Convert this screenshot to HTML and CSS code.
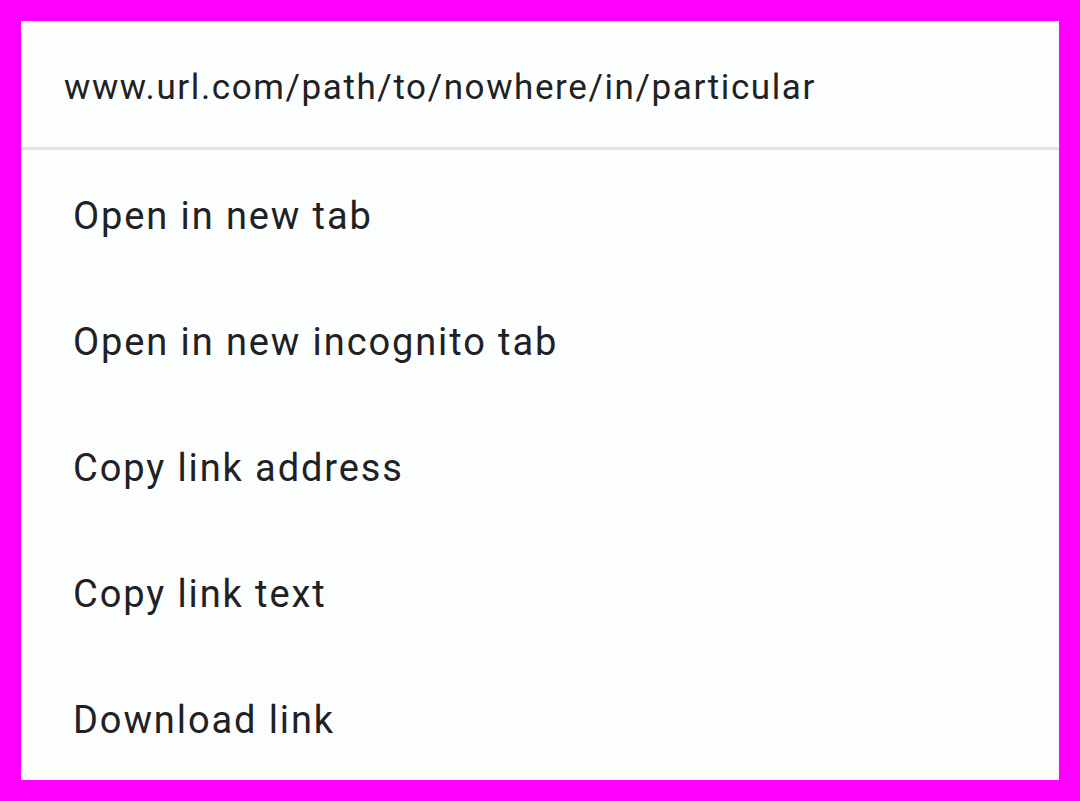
FILE: index.html
```html
<!DOCTYPE html>
<html>
<head>
<meta charset="utf-8">
<link rel="stylesheet" href="styles.css">
</head>
<body>
<div class="menu">
  <div class="menu-header">www.url.com/path/to/nowhere/in/particular</div>
  <div class="menu-items">
    <div class="menu-item">Open in new tab</div>
    <div class="menu-item">Open in new incognito tab</div>
    <div class="menu-item">Copy link address</div>
    <div class="menu-item">Copy link text</div>
    <div class="menu-item">Download link</div>
  </div>
</div>
</body>
</html>
```
FILE: styles.css
```css
html, body {
  margin: 0;
  padding: 0;
}
body {
  background: #ff00ff;
  width: 1080px;
  height: 801px;
  padding: 21px;
  box-sizing: border-box;
  font-family: Roboto, "Liberation Sans", sans-serif;
  color: #202124;
}
.menu {
  background: #fcfdfd;
  width: 1038px;
  height: 759px;
  display: flex;
  flex-direction: column;
}
.menu-header {
  height: 129px;
  box-sizing: border-box;
  border-bottom: 3px solid #e3e3ea;
  display: flex;
  align-items: center;
  padding-left: 43px;
  padding-top: 7px;
  font-size: 35px;
  letter-spacing: 1.6px;
}
.menu-items {
  display: flex;
  flex-direction: column;
}
.menu-item {
  height: 126px;
  box-sizing: border-box;
  display: flex;
  align-items: center;
  padding-left: 52px;
  padding-top: 6px;
  font-size: 38px;
  letter-spacing: 1.9px;
}
```
